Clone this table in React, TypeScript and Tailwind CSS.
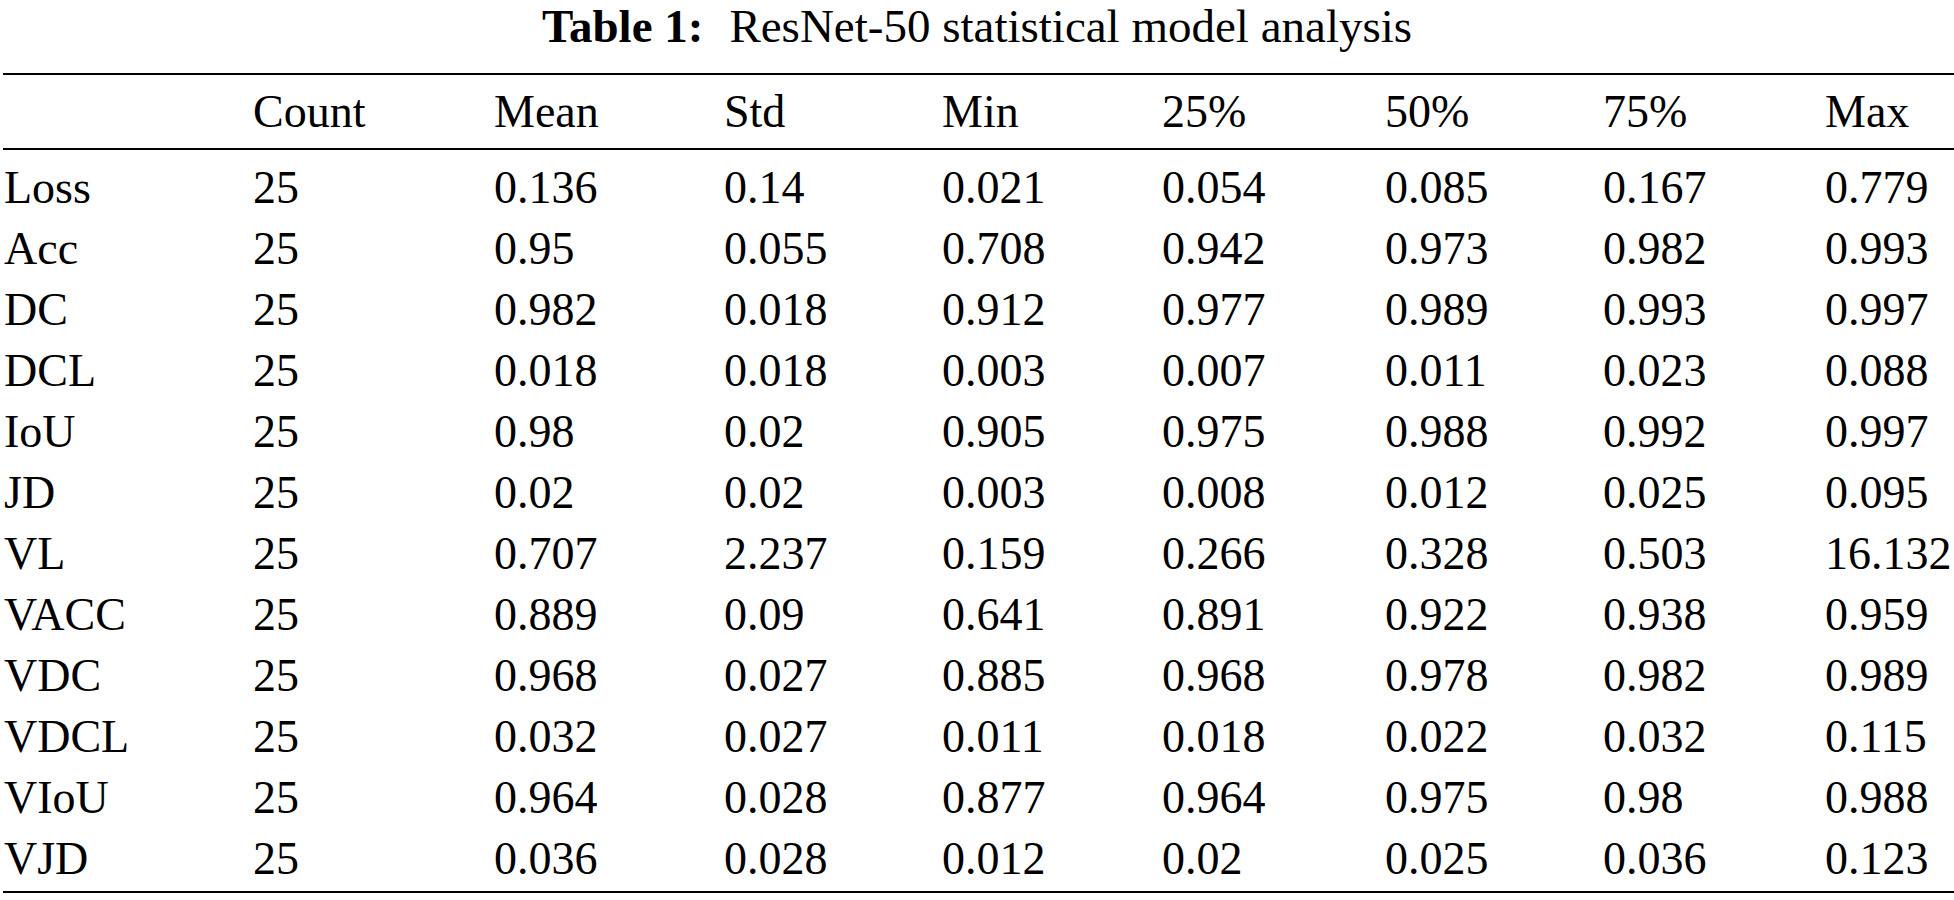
const columns = ["Count", "Mean", "Std", "Min", "25%", "50%", "75%", "Max"];

const rows: [string, ...string[]][] = [
  ["Loss", "25", "0.136", "0.14", "0.021", "0.054", "0.085", "0.167", "0.779"],
  ["Acc", "25", "0.95", "0.055", "0.708", "0.942", "0.973", "0.982", "0.993"],
  ["DC", "25", "0.982", "0.018", "0.912", "0.977", "0.989", "0.993", "0.997"],
  ["DCL", "25", "0.018", "0.018", "0.003", "0.007", "0.011", "0.023", "0.088"],
  ["IoU", "25", "0.98", "0.02", "0.905", "0.975", "0.988", "0.992", "0.997"],
  ["JD", "25", "0.02", "0.02", "0.003", "0.008", "0.012", "0.025", "0.095"],
  ["VL", "25", "0.707", "2.237", "0.159", "0.266", "0.328", "0.503", "16.132"],
  ["VACC", "25", "0.889", "0.09", "0.641", "0.891", "0.922", "0.938", "0.959"],
  ["VDC", "25", "0.968", "0.027", "0.885", "0.968", "0.978", "0.982", "0.989"],
  ["VDCL", "25", "0.032", "0.027", "0.011", "0.018", "0.022", "0.032", "0.115"],
  ["VIoU", "25", "0.964", "0.028", "0.877", "0.964", "0.975", "0.98", "0.988"],
  ["VJD", "25", "0.036", "0.028", "0.012", "0.02", "0.025", "0.036", "0.123"],
];

const grid =
  "grid grid-cols-[249px_241px_230px_218px_220px_223px_218px_222px_1fr] pl-[4px] h-[61px] leading-[61px] whitespace-nowrap";

export default function App() {
  return (
    <div className="w-[1954px] h-[900px] bg-white text-black font-['Liberation_Serif',serif] overflow-hidden">
      {/* Caption */}
      <div className="h-[73px] text-center text-[47px] leading-[53px] whitespace-nowrap">
        <span className="font-bold">Table 1:</span>
        <span className="ml-[26px]">ResNet-50 statistical model analysis</span>
      </div>

      <div className="ml-[3px] border-t-2 border-black" />

      {/* Header */}
      <div className="pt-[6px] pb-[6px] text-[46px]">
        <div className={grid}>
          <div />
          {columns.map((c) => (
            <div key={c}>{c}</div>
          ))}
        </div>
      </div>

      <div className="ml-[3px] border-t-2 border-black" />

      {/* Body */}
      <div className="pt-[7px] pb-[2px] text-[46px]">
        {rows.map((r) => (
          <div key={r[0]} className={grid}>
            {r.map((cell, i) => (
              <div key={i}>{cell}</div>
            ))}
          </div>
        ))}
      </div>

      <div className="ml-[3px] border-t-2 border-black" />
    </div>
  );
}
